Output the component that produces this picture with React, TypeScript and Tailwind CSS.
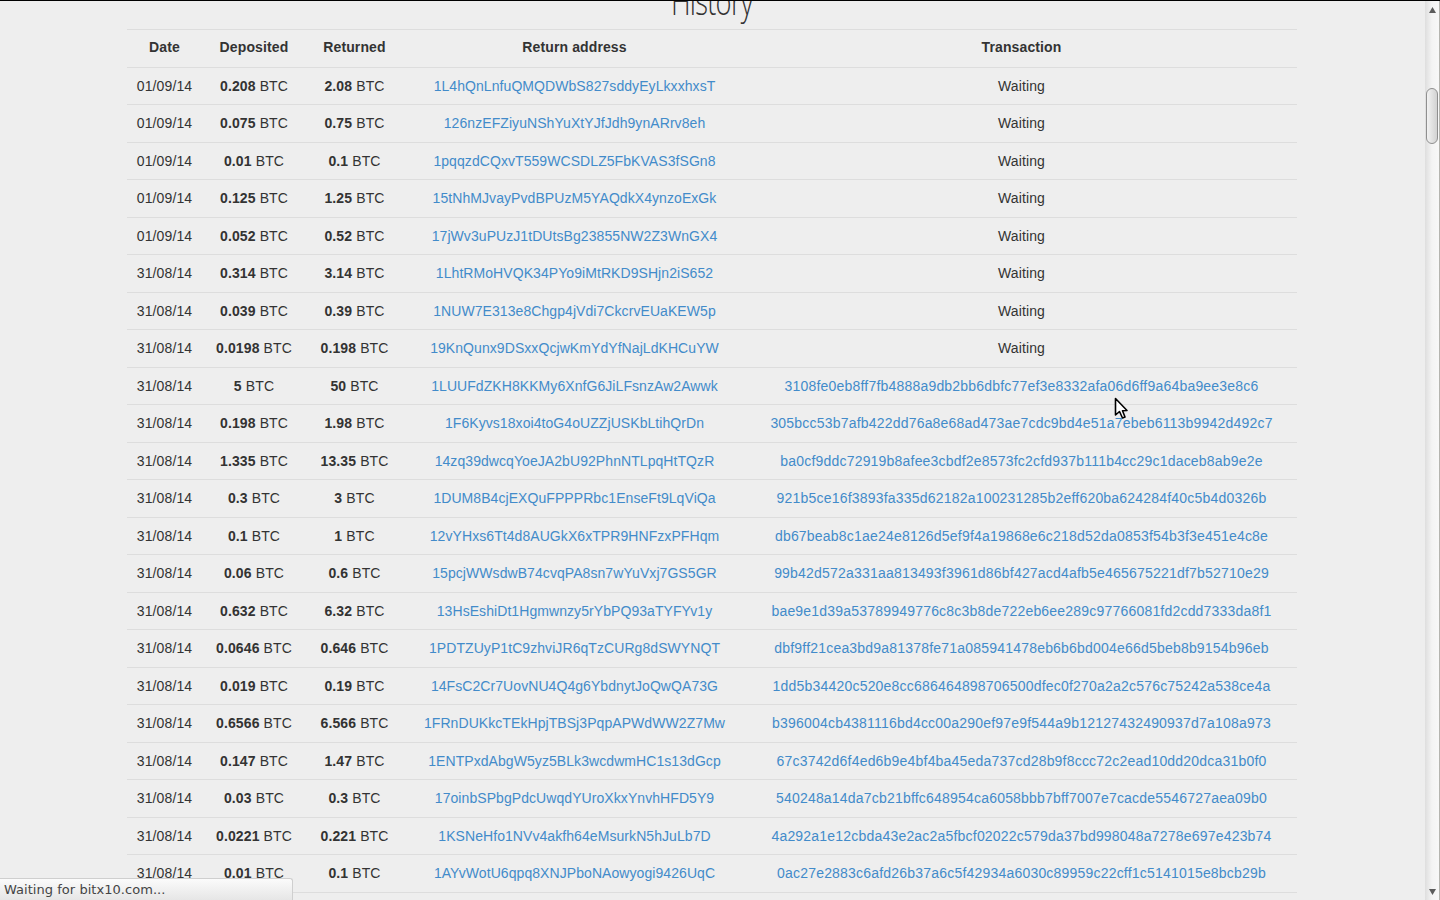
// History page of the deposit tracker, caught mid-load with the browser status bubble up.

interface HistoryRow {
  date: string
  deposited: string
  returned: string
  address: string
  tx: string | null
}

function row(date: string, deposited: string, returned: string, address: string, tx: string | null = null): HistoryRow {
  return { date, deposited, returned, address, tx }
}

const ROWS: HistoryRow[] = [
  row('01/09/14', '0.208', '2.08', '1L4hQnLnfuQMQDWbS827sddyEyLkxxhxsT'),
  row('01/09/14', '0.075', '0.75', '126nzEFZiyuNShYuXtYJfJdh9ynARrv8eh'),
  row('01/09/14', '0.01', '0.1', '1pqqzdCQxvT559WCSDLZ5FbKVAS3fSGn8'),
  row('01/09/14', '0.125', '1.25', '15tNhMJvayPvdBPUzM5YAQdkX4ynzoExGk'),
  row('01/09/14', '0.052', '0.52', '17jWv3uPUzJ1tDUtsBg23855NW2Z3WnGX4'),
  row('31/08/14', '0.314', '3.14', '1LhtRMoHVQK34PYo9iMtRKD9SHjn2iS652'),
  row('31/08/14', '0.039', '0.39', '1NUW7E313e8Chgp4jVdi7CkcrvEUaKEW5p'),
  row('31/08/14', '0.0198', '0.198', '19KnQunx9DSxxQcjwKmYdYfNajLdKHCuYW'),
  row('31/08/14', '5', '50', '1LUUFdZKH8KKMy6XnfG6JiLFsnzAw2Awwk', '3108fe0eb8ff7fb4888a9db2bb6dbfc77ef3e8332afa06d6ff9a64ba9ee3e8c6'),
  row('31/08/14', '0.198', '1.98', '1F6Kyvs18xoi4toG4oUZZjUSKbLtihQrDn', '305bcc53b7afb422dd76a8e68ad473ae7cdc9bd4e51a7ebeb6113b9942d492c7'),
  row('31/08/14', '1.335', '13.35', '14zq39dwcqYoeJA2bU92PhnNTLpqHtTQzR', 'ba0cf9ddc72919b8afee3cbdf2e8573fc2cfd937b111b4cc29c1daceb8ab9e2e'),
  row('31/08/14', '0.3', '3', '1DUM8B4cjEXQuFPPPRbc1EnseFt9LqViQa', '921b5ce16f3893fa335d62182a100231285b2eff620ba624284f40c5b4d0326b'),
  row('31/08/14', '0.1', '1', '12vYHxs6Tt4d8AUGkX6xTPR9HNFzxPFHqm', 'db67beab8c1ae24e8126d5ef9f4a19868e6c218d52da0853f54b3f3e451e4c8e'),
  row('31/08/14', '0.06', '0.6', '15pcjWWsdwB74cvqPA8sn7wYuVxj7GS5GR', '99b42d572a331aa813493f3961d86bf427acd4afb5e465675221df7b52710e29'),
  row('31/08/14', '0.632', '6.32', '13HsEshiDt1Hgmwnzy5rYbPQ93aTYFYv1y', 'bae9e1d39a53789949776c8c3b8de722eb6ee289c97766081fd2cdd7333da8f1'),
  row('31/08/14', '0.0646', '0.646', '1PDTZUyP1tC9zhviJR6qTzCURg8dSWYNQT', 'dbf9ff21cea3bd9a81378fe71a085941478eb6b6bd004e66d5beb8b9154b96eb'),
  row('31/08/14', '0.019', '0.19', '14FsC2Cr7UovNU4Q4g6YbdnytJoQwQA73G', '1dd5b34420c520e8cc686464898706500dfec0f270a2a2c576c75242a538ce4a'),
  row('31/08/14', '0.6566', '6.566', '1FRnDUKkcTEkHpjTBSj3PqpAPWdWW2Z7Mw', 'b396004cb4381116bd4cc00a290ef97e9f544a9b12127432490937d7a108a973'),
  row('31/08/14', '0.147', '1.47', '1ENTPxdAbgW5yz5BLk3wcdwmHC1s13dGcp', '67c3742d6f4ed6b9e4bf4ba45eda737cd28b9f8ccc72c2ead10dd20dca31b0f0'),
  row('31/08/14', '0.03', '0.3', '17oinbSPbgPdcUwqdYUroXkxYnvhHFD5Y9', '540248a14da7cb21bffc648954ca6058bbb7bff7007e7cacde5546727aea09b0'),
  row('31/08/14', '0.0221', '0.221', '1KSNeHfo1NVv4akfh64eMsurkN5hJuLb7D', '4a292a1e12cbda43e2ac2a5fbcf02022c579da37bd998048a7278e697e423b74'),
  row('31/08/14', '0.01', '0.1', '1AYvWotU6qpq8XNJPboNAowyogi9426UqC', '0ac27e2883c6afd26b37a6c5f42934a6030c89959c22cff1c5141015e8bcb29b'),
]

const HEADERS = [
  { label: 'Date', width: 'w-[75px]' },
  { label: 'Deposited', width: 'w-[104px]' },
  { label: 'Returned', width: 'w-[97px]' },
  { label: 'Return address', width: 'w-[343px]' },
  { label: 'Transaction', width: 'w-[551px]' },
]

function Btc({ value }: { value: string }) {
  return (
    <>
      <strong className="font-bold">{value}</strong> BTC
    </>
  )
}

// Native browser scrollbar from the screenshot
function Scrollbar() {
  return (
    <div className="flex h-full w-[15px] shrink-0 flex-col items-center border-r border-[#b5b5b0] bg-gradient-to-r from-[#dedede] via-[#f4f4f4] to-[#f8f8f8]">
      <svg width="7" height="6" viewBox="0 0 7 6" className="mt-[6px] shrink-0">
        <path d="M3.5 0 L7 6 L0 6 Z" fill="#5c5c5c" />
      </svg>
      <div className="mt-[75px] h-[56px] w-[12px] shrink-0 rounded-[6px] border border-[#8f8f8f] bg-gradient-to-r from-[#f2f2f2] to-[#d2d2d2]" />
      <svg width="7" height="6" viewBox="0 0 7 6" className="mb-[5px] mt-auto shrink-0">
        <path d="M0 0 L7 0 L3.5 6 Z" fill="#5c5c5c" />
      </svg>
    </div>
  )
}

export default function App() {
  return (
    <div className="relative flex h-[900px] w-full overflow-hidden border-t border-black bg-[#eeeeee] font-['Liberation_Sans',Arial,sans-serif] text-sm tracking-[0.12px] text-[#333333]">
      <main className="min-w-0 flex-1 overflow-hidden">
        <div className="ml-[127px] w-[1170px]">
          <h1 className="-mt-[24px] h-[51.5px] text-center font-['Open_Sans',sans-serif] text-[36px] font-light leading-[50px] tracking-[-1px] text-[#333333]">
            <span className="inline-block scale-x-[0.76]">History</span>
          </h1>
          <table className="w-full table-fixed border-collapse text-center">
            <thead>
              <tr className="h-[38px]">
                {HEADERS.map((h) => (
                  <th key={h.label} className={`${h.width} border-y border-[#dddddd] px-2 pb-[2px] font-bold`}>
                    {h.label}
                  </th>
                ))}
              </tr>
            </thead>
            <tbody>
              {ROWS.map((r) => (
                <tr key={r.address} className="h-[37.5px]">
                  <td className="border-b border-[#dddddd] px-2">{r.date}</td>
                  <td className="border-b border-[#dddddd] px-2">
                    <Btc value={r.deposited} />
                  </td>
                  <td className="border-b border-[#dddddd] px-2">
                    <Btc value={r.returned} />
                  </td>
                  <td className="border-b border-[#dddddd] px-2">
                    <a href="#" className="tracking-[0.07px] text-[#428bca]">
                      {r.address}
                    </a>
                  </td>
                  <td className="border-b border-[#dddddd] px-2">
                    {r.tx ? (
                      <a href="#" className="tracking-[0.2px] text-[#428bca]">
                        {r.tx}
                      </a>
                    ) : (
                      'Waiting'
                    )}
                  </td>
                </tr>
              ))}
            </tbody>
          </table>
        </div>
      </main>
      <Scrollbar />

      {/* status bubble */}
      <div className="absolute bottom-0 left-0 h-[22px] w-[293px] rounded-tr-[3px] border-r border-t border-[#cfcfcf] bg-gradient-to-b from-[#fbfbfb] to-[#e6e6e6] pl-[4px] font-['DejaVu_Sans',sans-serif] text-[13px] leading-[21px] tracking-[0.04px] text-[#444444]">
        Waiting for bitx10.com...
      </div>

      {/* mouse pointer */}
      <svg width="15" height="23" viewBox="0 0 15 23" className="absolute left-[1114px] top-[396px]">
        <path d="M1.5 1.5 L1.5 18 L5.5 14.5 L8.5 21 L11 20 L8.5 13.8 L13 13.5 Z" fill="#ffffff" stroke="#000000" strokeWidth="1.6" strokeLinejoin="round" />
      </svg>
    </div>
  )
}
